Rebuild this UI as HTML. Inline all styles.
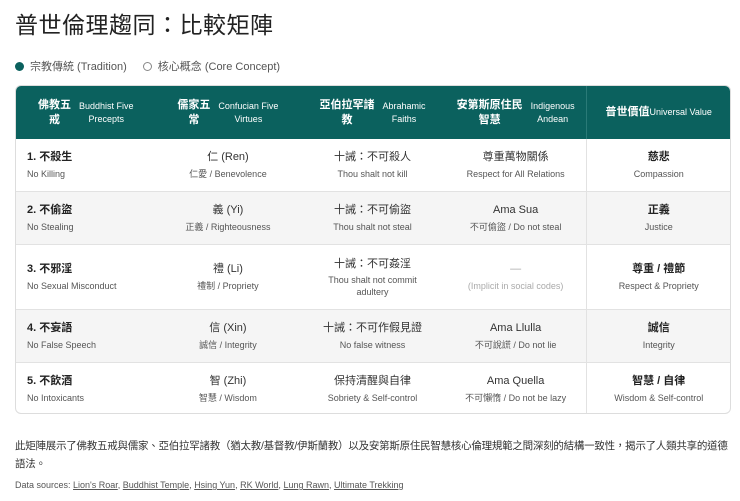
<!DOCTYPE html>
<html><head><meta charset="utf-8"><style>
*{margin:0;padding:0;box-sizing:border-box}
body{width:740px;height:501px;background:#fff;font-family:"Liberation Sans","Noto Sans CJK TC",sans-serif;color:#222;position:relative;overflow:hidden}
h1{position:absolute;left:15px;top:6px;font-size:23px;font-weight:400;color:#222;letter-spacing:0.5px}
.legend{position:absolute;left:15px;top:58px;font-size:11px;color:#555;display:flex;align-items:center}
.dot{width:9px;height:9px;border-radius:50%;background:#0b615e;display:inline-block;margin-right:6px}
.odot{width:9px;height:9px;border-radius:50%;border:1px solid #888;display:inline-block;margin:0 6px 0 16px}
.tbl{position:absolute;left:15px;top:85px;width:716px;height:329px;border:1px solid #ddd;border-radius:6px;overflow:hidden}
.row{display:flex;border-bottom:1px solid #e2e2e2}
.row:last-child{border-bottom:none}
.hd{background:#0b615e;color:#fff;height:53px;border-bottom:none}
.c{display:flex;flex-direction:column;justify-content:center;align-items:center;text-align:center}
.c1{width:140px;align-items:flex-start;text-align:left;padding-left:11px}
.c2{width:145px}.c3{width:145px}.c4{width:142px}.c5{width:144px;border-left:1px solid #e2e2e2}
.hd .c{flex-direction:row;gap:8px;font-size:9px;line-height:13px}
.hd .c1{justify-content:center;align-items:center;padding-left:0;text-align:center}
.hd .c5{border-left:1px solid #2a7a77}
.hd b{font-size:11px;line-height:15px}
.g{background:#f5f5f5}
.m{font-size:11px;color:#333;line-height:16px}
.s{font-size:9px;color:#555;line-height:14px;margin-top:2px}
.c1 .m,.c5 .m{font-weight:bold;color:#222}
.foot{position:absolute;left:15px;top:437px;font-size:10.5px;color:#333;line-height:18px;width:716px;letter-spacing:-0.25px}
.src{position:absolute;left:15px;top:480px;font-size:9px;color:#555}
.src u{color:#555}
</style></head><body>
<h1>普世倫理趨同：比較矩陣</h1>
<div class="legend"><span class="dot"></span>宗教傳統 (Tradition)<span class="odot"></span>核心概念 (Core Concept)</div>
<div class="tbl">
<div class="row hd">
<div class="c c1"><b>佛教五<br>戒</b><span>Buddhist Five<br>Precepts</span></div>
<div class="c c2"><b>儒家五<br>常</b><span>Confucian Five<br>Virtues</span></div>
<div class="c c3"><b>亞伯拉罕諸<br>教</b><span>Abrahamic<br>Faiths</span></div>
<div class="c c4"><b>安第斯原住民<br>智慧</b><span>Indigenous<br>Andean</span></div>
<div class="c c5" style="gap:0"><b>普世價值</b><span>Universal Value</span></div>
</div>
<div class="row" style="height:53px">
<div class="c c1"><div class="m">1. 不殺生</div><div class="s">No Killing</div></div>
<div class="c c2"><div class="m">仁 (Ren)</div><div class="s">仁愛 / Benevolence</div></div>
<div class="c c3"><div class="m">十誡：不可殺人</div><div class="s">Thou shalt not kill</div></div>
<div class="c c4"><div class="m">尊重萬物關係</div><div class="s">Respect for All Relations</div></div>
<div class="c c5"><div class="m">慈悲</div><div class="s">Compassion</div></div>
</div>
<div class="row g" style="height:53px">
<div class="c c1"><div class="m">2. 不偷盜</div><div class="s">No Stealing</div></div>
<div class="c c2"><div class="m">義 (Yi)</div><div class="s">正義 / Righteousness</div></div>
<div class="c c3"><div class="m">十誡：不可偷盜</div><div class="s">Thou shalt not steal</div></div>
<div class="c c4"><div class="m">Ama Sua</div><div class="s">不可偷盜 / Do not steal</div></div>
<div class="c c5"><div class="m">正義</div><div class="s">Justice</div></div>
</div>
<div class="row" style="height:65px">
<div class="c c1"><div class="m">3. 不邪淫</div><div class="s">No Sexual Misconduct</div></div>
<div class="c c2"><div class="m">禮 (Li)</div><div class="s">禮制 / Propriety</div></div>
<div class="c c3"><div class="m">十誡：不可姦淫</div><div class="s" style="line-height:12px">Thou shalt not commit<br>adultery</div></div>
<div class="c c4"><div class="m" style="color:#aaa">—</div><div class="s" style="color:#aaa">(Implicit in social codes)</div></div>
<div class="c c5"><div class="m">尊重 / 禮節</div><div class="s">Respect &amp; Propriety</div></div>
</div>
<div class="row g" style="height:53px">
<div class="c c1"><div class="m">4. 不妄語</div><div class="s">No False Speech</div></div>
<div class="c c2"><div class="m">信 (Xin)</div><div class="s">誠信 / Integrity</div></div>
<div class="c c3"><div class="m">十誡：不可作假見證</div><div class="s">No false witness</div></div>
<div class="c c4"><div class="m">Ama Llulla</div><div class="s">不可說謊 / Do not lie</div></div>
<div class="c c5"><div class="m">誠信</div><div class="s">Integrity</div></div>
</div>
<div class="row" style="height:52px">
<div class="c c1"><div class="m">5. 不飲酒</div><div class="s">No Intoxicants</div></div>
<div class="c c2"><div class="m">智 (Zhi)</div><div class="s">智慧 / Wisdom</div></div>
<div class="c c3"><div class="m">保持清醒與自律</div><div class="s">Sobriety &amp; Self-control</div></div>
<div class="c c4"><div class="m">Ama Quella</div><div class="s">不可懶惰 / Do not be lazy</div></div>
<div class="c c5"><div class="m">智慧 / 自律</div><div class="s">Wisdom &amp; Self-control</div></div>
</div>
</div>
<div class="foot">此矩陣展示了佛教五戒與儒家、亞伯拉罕諸教（猶太教/基督教/伊斯蘭教）以及安第斯原住民智慧核心倫理規範之間深刻的結構一致性，揭示了人類共享的道德<br>語法。</div>
<div class="src">Data sources: <u>Lion's Roar</u>, <u>Buddhist Temple</u>, <u>Hsing Yun</u>, <u>RK World</u>, <u>Lung Rawn</u>, <u>Ultimate Trekking</u></div>
</body></html>
